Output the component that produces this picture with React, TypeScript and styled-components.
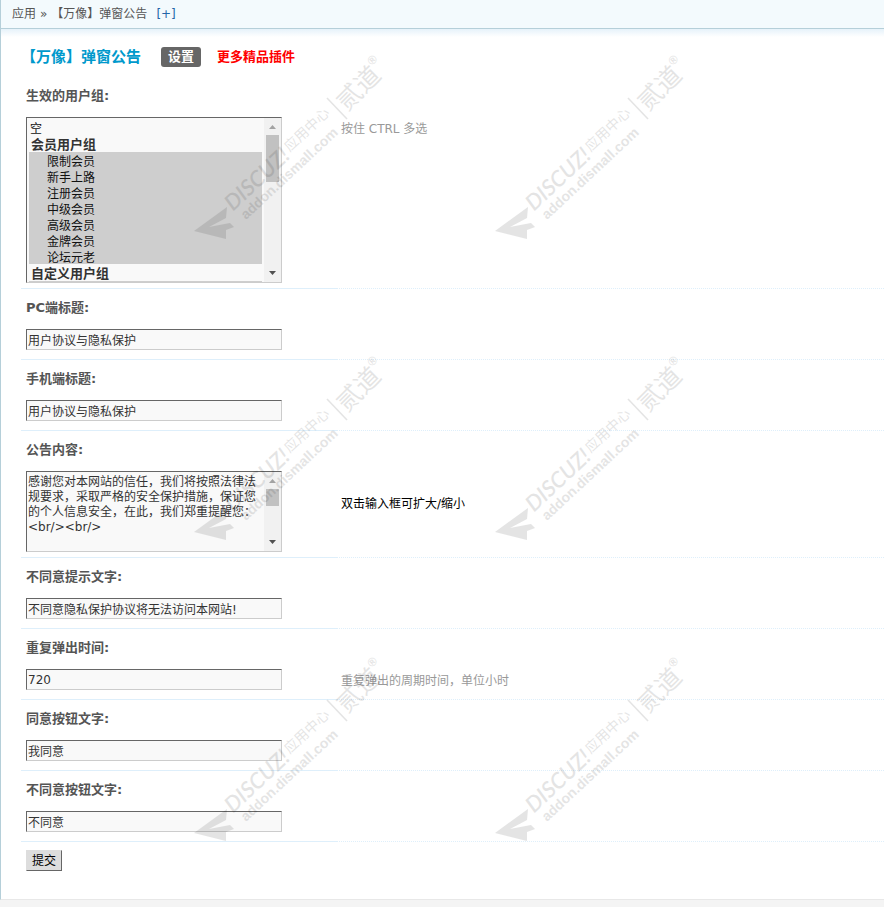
import React from "react";
import styled, { createGlobalStyle, css } from "styled-components";

const GlobalStyle = createGlobalStyle`
  * { box-sizing: border-box; }
  body {
    margin: 0;
    background: #f4f4f4;
    color: #000;
    font: 12px/16px "DejaVu Sans", "Noto Sans CJK SC", sans-serif;
  }
`;

const Page = styled.div`
  position: relative;
  overflow: hidden;
  background: #fff;
  border-left: 1px solid #b5cfd9;
  border-bottom: 1px solid #e8e8e8;
`;

const Breadcrumb = styled.nav`
  display: flex;
  align-items: center;
  gap: 4px;
  height: 29px;
  padding-left: 11px;
  color: #555;
  background: #f3fafd;
  border-bottom: 1px solid #b5cfd9;
`;

const AddLink = styled.a`
  margin-left: 5px;
  color: #2366a8;
  text-decoration: none;
`;

const Content = styled.main`
  padding: 16px 0 28px 20px;
  background: linear-gradient(#e6f2fa, #fff 8px);
`;

const TitleBar = styled.header`
  display: flex;
  align-items: center;
  height: 24px;
  margin-bottom: 8px;
`;

const Title = styled.h1`
  margin: 0 20px 0 0;
  color: #0099cc;
  font-size: 15px;
  line-height: 24px;
`;

const Tab = styled.a`
  padding: 0 7px;
  border-radius: 3px;
  background: #666;
  color: #fff;
  font-size: 13px;
  font-weight: bold;
  line-height: 20px;
  text-decoration: none;
`;

const MoreLink = styled.a`
  margin-left: 16px;
  color: #f00;
  font-size: 13px;
  font-weight: bold;
  text-decoration: none;
`;

const Row = styled.section`
  display: grid;
  grid-template-columns: 316px 1fr;
`;

const Label = styled.label`
  grid-column: 1 / -1;
  padding: 11px 5px 13px;
  color: #555;
  font-size: 13px;
  font-weight: bold;
  line-height: 16px;
`;

const ControlCell = styled.div<{ $tall?: boolean }>`
  display: flex;
  padding: 0 5px ${(p) => (p.$tall ? 5 : 9)}px;
  border-bottom: 1px solid #deeffb;
`;

const Hint = styled.div<{ $dark?: boolean }>`
  padding: ${(p) => (p.$dark ? 25 : 4)}px 5px 0 4px;
  color: ${(p) => (p.$dark ? "#000" : "#999")};
  border-bottom: 1px dotted #deeffb;
`;

const sunken = css`
  width: 256px;
  margin: 0;
  border: 1px solid;
  border-color: #666 #ccc #ccc #666;
  border-radius: 0;
  outline: none;
  background: #f9f9f9;
`;

const TextInput = styled.input`
  ${sunken}
  height: 21px;
  padding: 1px;
  color: #333;
  font: inherit;
`;

const ScrollBox = styled.div<{ $height: number }>`
  ${sunken}
  display: flex;
  height: ${(p) => p.$height}px;
`;

const scrollField = css`
  flex: 1;
  min-width: 0;
  height: 100%;
  margin: 0;
  border: 0;
  border-radius: 0;
  outline: none;
  background: transparent;
  color: #333;
  font: inherit;
  scrollbar-width: none;
`;

const TextArea = styled.textarea`
  ${scrollField}
  padding: 3px 1px 0;
  line-height: 15px;
  resize: none;
`;

const GroupSelect = styled.select`
  ${scrollField}
  padding: 1px 2px;

  option {
    height: 16px;
    min-height: 16px;
    padding: 0 1px;
    color: #111;
    font-size: 12px;
    font-weight: normal;
  }
  optgroup {
    margin-top: -1px;
    color: #333;
    font-size: 13px;
  }
  optgroup > option { padding-left: 18px; }
  /* keeps the group titles on the same 16px pitch as the options */
  optgroup > option:first-of-type { margin-top: -2px; }
  option:checked { background: #cecece linear-gradient(#cecece, #cecece); }
`;

const ScrollBar = styled.div`
  display: flex;
  flex-direction: column;
  width: 17px;
  background: #f1f1f1;
`;

const ArrowButton = styled.button`
  display: flex;
  width: 17px;
  height: 17px;
  padding: 0;
  border: 0;
  background: none;
`;

const Thumb = styled.div<{ $length: number }>`
  height: ${(p) => p.$length}px;
  margin: 0 2px auto;
  background: #c1c1c1;
`;

const SubmitRow = styled.div`
  padding: 8px 5px 0;
`;

const SubmitButton = styled.button`
  display: block;
  height: 21px;
  padding: 1px 5px 0;
  border: 1px solid;
  border-color: #ddd #666 #666 #ddd;
  border-radius: 0;
  background: #ddd;
  color: #000;
  font: inherit;
`;

const WatermarkLayer = styled.div`
  position: absolute;
  top: 0;
  left: 179px;
  display: grid;
  grid-template-columns: repeat(2, 301px);
  pointer-events: none;
`;

const Mark = styled.svg`
  display: block;
  width: 301px;
  height: 301px;
  opacity: 0.1;
`;

const Watermark = () => (
  <Mark viewBox="0 0 301 301" aria-hidden="true">
    <path d="M14 231L47 207L46 218L29 227L50 223L54 227L46 230V239Z" />
    <g transform="translate(55 214) rotate(-43)">
      <text x="0" y="-3" fontFamily="Lato, sans-serif" fontStyle="italic" fontWeight="600" fontSize="22">DISCUZ!</text>
      <text x="82" y="-8" fontFamily="Noto Sans CJK SC, sans-serif" fontSize="14">应用中心</text>
      <text x="4" y="12" fontFamily="Liberation Sans, sans-serif" fontWeight="700" fontSize="14">addon.dismall.com</text>
    </g>
    <path d="M147 98L167 119" stroke="#000" strokeWidth="1.500" />
    <text transform="translate(167 112) rotate(-45)" fontFamily="Noto Sans CJK SC, sans-serif" fontSize="25">贰道</text>
    <text transform="translate(192 66) rotate(-45)" fontFamily="Liberation Sans, sans-serif" fontWeight="700" fontSize="12">®</text>
  </Mark>
);

const memberGroups = ["限制会员", "新手上路", "注册会员", "中级会员", "高级会员", "金牌会员", "论坛元老"];
const customGroups = ["贵宾会员", "认证会员", "荣誉会员", "实习版主", "网站编辑", "信息监察员", "审核员"];
const systemGroups = ["管理员", "超级版主", "版主", "禁止发言", "禁止访问", "禁止 IP", "游客", "等待验证会员"];

const notice = `感谢您对本网站的信任，我们将按照法律法规要求，采取严格的安全保护措施，保证您的个人信息安全，在此，我们郑重提醒您：
<br/><br/>


请您仔细阅读用户协议。
<br/><br/>

请您仔细阅读隐私保护政策。
<br/><br/>`;

type FieldProps = {
  id: string;
  label: string;
  hint?: string;
  dark?: boolean;
  tall?: boolean;
  children: React.ReactNode;
};

const Field = ({ id, label, hint, dark, tall, children }: FieldProps) => (
  <Row>
    <Label htmlFor={id}>{label}</Label>
    <ControlCell $tall={tall}>{children}</ControlCell>
    <Hint $dark={dark}>{hint}</Hint>
  </Row>
);

const InputField = ({ id, label, value, hint }: { id: string; label: string; value: string; hint?: string }) => (
  <Field id={id} label={label} hint={hint}>
    <TextInput id={id} defaultValue={value} />
  </Field>
);

const Arrow = ({ path, color, label }: { path: string; color: string; label: string }) => (
  <ArrowButton type="button" tabIndex={-1} aria-label={label}>
    <svg width="17" height="17" viewBox="0 0 17 17"><path d={path} fill={color} /></svg>
  </ArrowButton>
);

const Scroller = ({ thumb }: { thumb: number }) => (
  <ScrollBar>
    <Arrow path="M5 11h7L8.500 7z" color="#a3a3a3" label="向上滚动" />
    <Thumb $length={thumb} />
    <Arrow path="M5 6h7L8.500 10z" color="#505050" label="向下滚动" />
  </ScrollBar>
);

const Options = ({ names }: { names: string[] }) => (
  <>{names.map((n) => <option key={n} value={n}>{n}</option>)}</>
);

export default function App() {
  return (
    <>
      <GlobalStyle />
      <Page>
        <Breadcrumb>
          <span>应用</span>
          <span>»</span>
          <span>【万像】弹窗公告</span>
          <AddLink href="#add">[+]</AddLink>
        </Breadcrumb>
        <Content>
          <TitleBar>
            <Title>【万像】弹窗公告</Title>
            <Tab href="#settings">设置</Tab>
            <MoreLink href="#more">更多精品插件</MoreLink>
          </TitleBar>
          <form onSubmit={(e) => e.preventDefault()}>
            <Field id="groups" label="生效的用户组:" hint="按住 CTRL 多选" tall>
              <ScrollBox $height={166}>
                <GroupSelect id="groups" multiple size={10} defaultValue={[...memberGroups, ...customGroups]}>
                  <option value="">空</option>
                  <optgroup label="会员用户组"><Options names={memberGroups} /></optgroup>
                  <optgroup label="自定义用户组"><Options names={customGroups} /></optgroup>
                  <optgroup label="系统用户组"><Options names={systemGroups} /></optgroup>
                </GroupSelect>
                <Scroller thumb={47} />
              </ScrollBox>
            </Field>
            <InputField id="pcTitle" label="PC端标题:" value="用户协议与隐私保护" />
            <InputField id="mobileTitle" label="手机端标题:" value="用户协议与隐私保护" />
            <Field id="notice" label="公告内容:" hint="双击输入框可扩大/缩小" dark tall>
              <ScrollBox $height={81}>
                <TextArea id="notice" defaultValue={notice} />
                <Scroller thumb={17} />
              </ScrollBox>
            </Field>
            <InputField id="refuseTip" label="不同意提示文字:" value="不同意隐私保护协议将无法访问本网站!" />
            <InputField id="interval" label="重复弹出时间:" value="720" hint="重复弹出的周期时间，单位小时" />
            <InputField id="agreeText" label="同意按钮文字:" value="我同意" />
            <InputField id="refuseText" label="不同意按钮文字:" value="不同意" />
            <SubmitRow><SubmitButton type="submit">提交</SubmitButton></SubmitRow>
          </form>
        </Content>
        <WatermarkLayer>
          {Array.from({ length: 6 }, (_, i) => <Watermark key={i} />)}
        </WatermarkLayer>
      </Page>
    </>
  );
}
